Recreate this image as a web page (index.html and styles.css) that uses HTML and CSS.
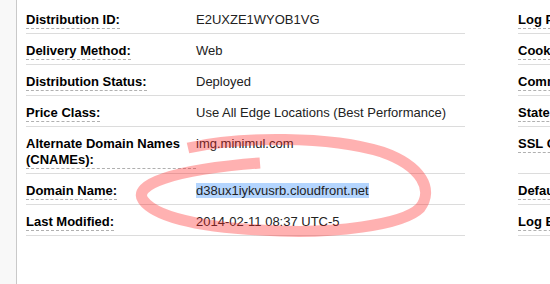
FILE: index.html
```html
<!DOCTYPE html>
<html lang="en">
<head>
  <meta charset="UTF-8" />
  <title>Distribution Settings</title>
  <link rel="stylesheet" href="styles.css">
</head>
<body>
  <div class="page">
    <div class="sidebar"></div>
    <div class="details">
      <div class="details-table details-main">
        <div class="row">
          <div class="label"><abbr>Distribution ID:</abbr></div>
          <div class="value">E2UXZE1WYOB1VG</div>
        </div>
        <div class="row">
          <div class="label"><abbr>Delivery Method:</abbr></div>
          <div class="value">Web</div>
        </div>
        <div class="row">
          <div class="label"><abbr>Distribution Status:</abbr></div>
          <div class="value">Deployed</div>
        </div>
        <div class="row">
          <div class="label"><abbr>Price Class:</abbr></div>
          <div class="value">Use All Edge Locations (Best Performance)</div>
        </div>
        <div class="row">
          <div class="label"><abbr>Alternate Domain Names (CNAMEs):</abbr></div>
          <div class="value">img.minimul.com</div>
        </div>
        <div class="row">
          <div class="label"><abbr>Domain Name:</abbr></div>
          <div class="value"><span class="selected">d38ux1iykvusrb.cloudfront.net</span></div>
        </div>
        <div class="row">
          <div class="label"><abbr>Last Modified:</abbr></div>
          <div class="value">2014-02-11 08:37 UTC-5</div>
        </div>
      </div>
      <div class="details-table details-side">
        <div class="row">
          <div class="label"><abbr>Log Prefix:</abbr></div>
          <div class="value">-</div>
        </div>
        <div class="row">
          <div class="label"><abbr>Cookie Logging:</abbr></div>
          <div class="value">Off</div>
        </div>
        <div class="row">
          <div class="label"><abbr>Comment:</abbr></div>
          <div class="value">-</div>
        </div>
        <div class="row">
          <div class="label"><abbr>State:</abbr></div>
          <div class="value">Enabled</div>
        </div>
        <div class="row tall">
          <div class="label"><abbr>SSL Certificate:</abbr></div>
          <div class="value">Default CloudFront Certificate</div>
        </div>
        <div class="row">
          <div class="label"><abbr>Default Root Object:</abbr></div>
          <div class="value">-</div>
        </div>
        <div class="row">
          <div class="label"><abbr>Log Bucket:</abbr></div>
          <div class="value">-</div>
        </div>
      </div>
    </div>
    <svg class="scribble" width="550" height="284" viewBox="0 0 550 284">
      <path d="M188,148 C240,136 330,136 382,152 C422,166 434,190 420,208 C402,226 330,233 280,231 C220,229 158,221 143,200 C133,185 170,170 260,163" />
    </svg>
  </div>
</body>
</html>
```

FILE: styles.css
```css
* {
  box-sizing: border-box;
  margin: 0;
  padding: 0;
}
body {
  background: #fff;
  color: #222;
  font-family: 'Liberation Sans', Arial, sans-serif;
  font-size: 13px;
  line-height: 16px;
  overflow: hidden;
}
.page {
  position: relative;
  display: flex;
  width: 550px;
  height: 284px;
  overflow: hidden;
}
.sidebar {
  flex: 0 0 17px;
  background: #f8f8f8;
  border-right: 1px solid #c9c9c9;
}
.details {
  display: flex;
  padding: 3px 0 0 9px;
  gap: 53px;
}
.details-table {
  flex: 0 0 auto;
}
.details-main {
  width: 439px;
}
.details-side {
  width: 400px;
}
.row {
  display: flex;
  padding: 9px 0 4px;
  border-bottom: 1px solid #dcdcdc;
}
.label {
  flex: 0 0 170px;
}
.label abbr {
  display: inline-block;
  vertical-align: top;
  font-weight: 700;
  color: #000;
  text-decoration: none;
  border-bottom: 1px dashed #b0b0b0;
}
.value {
  flex: 1;
  color: #222;
}
.tall .value {
  height: 33px;
}
.selected {
  background: #b4d5fe;
}
.scribble {
  position: absolute;
  top: 0;
  left: 0;
  pointer-events: none;
}
.scribble path {
  fill: none;
  stroke: rgb(255, 40, 40);
  stroke-opacity: 0.36;
  stroke-width: 11;
  stroke-linecap: butt;
  filter: blur(0.7px);
}
```
